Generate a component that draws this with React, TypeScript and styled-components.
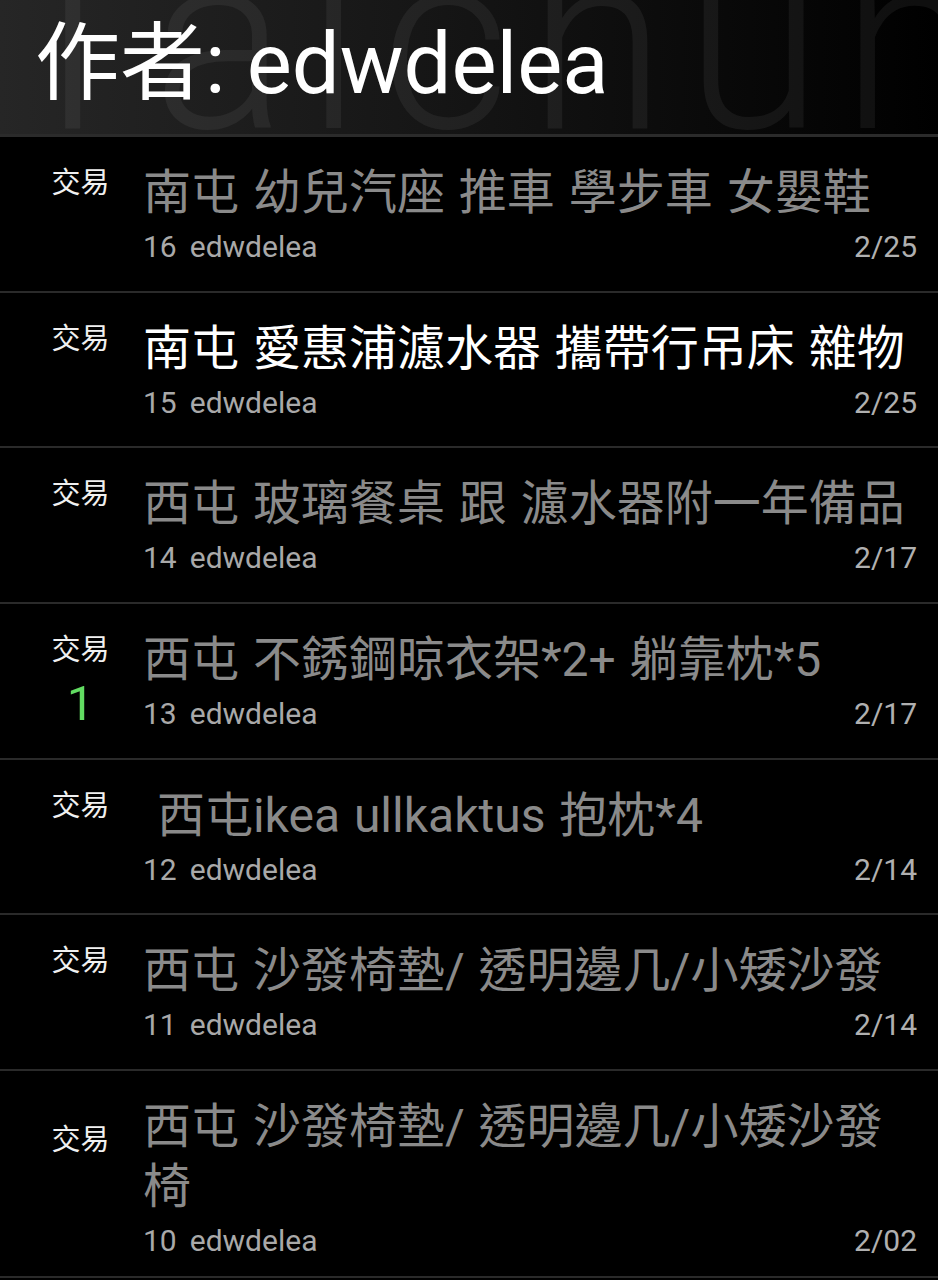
import React from "react";
import styled, { createGlobalStyle } from "styled-components";

const GlobalStyle = createGlobalStyle`
  html, body {
    margin: 0;
    padding: 0;
    background: #000;
  }
  body {
    font-family: Roboto, "Noto Sans CJK TC", sans-serif;
    -webkit-font-smoothing: antialiased;
  }
  * { box-sizing: border-box; }
`;

const Page = styled.div`
  width: 938px;
  height: 1280px;
  overflow: hidden;
  background: #000;
`;

const Header = styled.header`
  position: relative;
  height: 137px;
  border-bottom: 3px solid #2b2b2b;
  background: linear-gradient(to right, #262626 0%, #161616 45%, #000 100%);
  overflow: hidden;
  display: flex;
  align-items: center;
  padding: 0 0 6px 35px;
`;

const Watermark = styled.div`
  position: absolute;
  left: -2px;
  top: -82px;
  font-family: Roboto, sans-serif;
  font-weight: 300;
  font-size: 250px;
  line-height: 250px;
  letter-spacing: 19px;
  color: rgba(255, 255, 255, 0.06);
  white-space: nowrap;
  pointer-events: none;
`;

const HeaderTitle = styled.h1`
  position: relative;
  margin: 0;
  font-family: Roboto, "Noto Sans CJK TC", sans-serif;
  font-weight: 400;
  font-size: 85px;
  line-height: 1;
  color: #fff;
  white-space: nowrap;
`;

const List = styled.ul`
  list-style: none;
  margin: 0;
  padding: 0;
`;

const Row = styled.li`
  display: grid;
  grid-template-columns: 125px 1fr;
  align-items: start;
  min-height: 155.7px;
  padding: 26px 21px 19px 18px;
  border-bottom: 2px solid #2a2a2a;
`;

const LabelCol = styled.div<{ $wrapped?: boolean }>`
  display: flex;
  flex-direction: column;
  align-items: center;
  padding-top: ${(p) => (p.$wrapped ? "27px" : "4px")};
`;

const Label = styled.span`
  font-size: 29px;
  line-height: 32px;
  color: #f0f0f0;
`;

const Count = styled.span`
  margin-top: 13px;
  font-size: 49px;
  line-height: 50px;
  color: #62dc62;
`;

const Content = styled.div`
  display: flex;
  flex-direction: column;
  min-width: 0;
`;

const Title = styled.div<{ $unread?: boolean }>`
  font-size: 48px;
  line-height: 60px;
  word-spacing: 2px;
  color: ${(p) => (p.$unread ? "#ffffff" : "#8a8a8a")};
  white-space: pre-wrap;
`;

const Meta = styled.div`
  display: flex;
  align-items: center;
  margin-top: 8px;
  font-size: 30px;
  line-height: 32px;
  color: #a9a9a9;
`;

const Num = styled.span`
  margin-right: 13px;
`;

const Author = styled.span`
  flex: 1;
`;

const DateText = styled.span`
  color: #b0b0b0;
`;

type Post = {
  title: string;
  num: number;
  date: string;
  unread?: boolean;
  count?: number;
  wrapped?: boolean;
};

const posts: Post[] = [
  { title: "南屯 幼兒汽座 推車 學步車 女嬰鞋", num: 16, date: "2/25" },
  { title: "南屯 愛惠浦濾水器 攜帶行吊床 雜物", num: 15, date: "2/25", unread: true },
  { title: "西屯 玻璃餐桌 跟 濾水器附一年備品", num: 14, date: "2/17" },
  { title: "西屯 不銹鋼晾衣架*2+ 躺靠枕*5", num: 13, date: "2/17", count: 1 },
  { title: " 西屯ikea ullkaktus 抱枕*4", num: 12, date: "2/14" },
  { title: "西屯 沙發椅墊/ 透明邊几/小矮沙發", num: 11, date: "2/14" },
  { title: "西屯 沙發椅墊/ 透明邊几/小矮沙發椅", num: 10, date: "2/02", wrapped: true },
];

export default function App() {
  return (
    <Page>
      <GlobalStyle />
      <Header>
        <Watermark aria-hidden="true">Taichung</Watermark>
        <HeaderTitle>作者: edwdelea</HeaderTitle>
      </Header>
      <List>
        {posts.map((p) => (
          <Row key={p.num}>
            <LabelCol $wrapped={p.wrapped}>
              <Label>交易</Label>
              {p.count ? <Count>{p.count}</Count> : null}
            </LabelCol>
            <Content>
              <Title $unread={p.unread}>{p.title}</Title>
              <Meta>
                <Num>{p.num}</Num>
                <Author>edwdelea</Author>
                <DateText>{p.date}</DateText>
              </Meta>
            </Content>
          </Row>
        ))}
      </List>
    </Page>
  );
}
